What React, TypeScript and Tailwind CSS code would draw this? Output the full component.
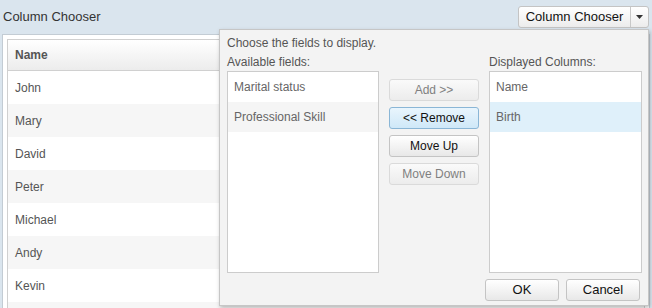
import React from "react";

const rows = ["John", "Mary", "David", "Peter", "Michael", "Andy", "Kevin", ""];

function Btn({ label, kind }: { label: string; kind: "disabled" | "active" | "normal" }) {
  const cls =
    kind === "active"
      ? "border-[#8ab6d6] bg-gradient-to-b from-[#e9f5fd] to-[#cfe8f8] text-[#111]"
      : kind === "disabled"
      ? "border-[#dadada] bg-gradient-to-b from-[#fafafa] to-[#ececec] text-[#808080]"
      : "border-[#c4c4c4] bg-gradient-to-b from-[#ffffff] to-[#e8e8e8] text-[#111]";
  return (
    <div className={`h-[22px] w-[90px] rounded-[3px] border flex items-center justify-center text-[12px] ${cls}`}>
      {label}
    </div>
  );
}

export default function App() {
  return (
    <div
      className="relative w-[652px] h-[308px] overflow-hidden bg-[#dae5ee] text-[12px]"
      style={{ fontFamily: '"Liberation Sans", Arial, sans-serif' }}
    >
      <div className="h-[34px] flex items-center justify-between pl-[3px] pr-[3px]">
        <span className="text-[13px] text-[#333]">Column Chooser</span>
        <div className="h-[22px] w-[131px] mt-[-1px] rounded-[3px] border border-[#c4c4c4] bg-gradient-to-b from-white to-[#ececec] flex text-[13px] text-[#111]">
          <div className="flex-1 flex items-center justify-center">Column Chooser</div>
          <div className="w-[18px] border-l border-[#c8c8c8] flex items-center justify-center">
            <svg width="7" height="4" viewBox="0 0 7 4">
              <path d="M0 0h7L3.5 4z" fill="#333" />
            </svg>
          </div>
        </div>
      </div>
      <div className="ml-[2px] mr-[2px] h-[274px] border-l border-t border-r border-[#c3ccd4] bg-white pt-[4px] pl-[4px] pr-[4px]">
        <div className="border-l border-t border-r border-[#d0d0d0] h-full">
          <div className="h-[31px] border-b border-[#d0d0d0] bg-gradient-to-b from-white to-[#ececec] flex items-center pl-[7px] font-bold text-[#555]">
            Name
          </div>
          {rows.map((r, i) => (
            <div
              key={i}
              className={`h-[33px] flex items-center pl-[7px] text-[#555] ${i % 2 === 1 ? "bg-[#f6f6f6]" : "bg-white"}`}
            >
              {r}
            </div>
          ))}
        </div>
      </div>

      <div className="absolute left-[219px] top-[29px] w-[430px] h-[277px] border border-[#c6c6c6] bg-[#f3f3f3] shadow-[1px_2px_4px_rgba(0,0,0,0.25)] pl-[7px] pr-[6px] pt-[3px] flex flex-col text-[#555]">
        <div className="h-[19px] flex items-center">Choose the fields to display.</div>
        <div className="flex">
          <div className="w-[152px] flex flex-col">
            <div className="h-[19px] flex items-center">Available fields:</div>
            <div className="h-[202px] border border-[#cccccc] bg-white text-[#666]">
              <div className="h-[30px] flex items-center pl-[6px]">Marital status</div>
              <div className="h-[30px] flex items-center pl-[6px] bg-[#f5f5f5]">Professional Skill</div>
            </div>
          </div>
          <div className="ml-[10px] pt-[27px] flex flex-col gap-[6px]">
            <Btn label="Add >>" kind="disabled" />
            <Btn label="<< Remove" kind="active" />
            <Btn label="Move Up" kind="normal" />
            <Btn label="Move Down" kind="disabled" />
          </div>
          <div className="ml-[10px] w-[153px] flex flex-col">
            <div className="h-[19px] flex items-center">Displayed Columns:</div>
            <div className="h-[202px] border border-[#cccccc] bg-white text-[#666]">
              <div className="h-[30px] flex items-center pl-[6px]">Name</div>
              <div className="h-[30px] flex items-center pl-[6px] bg-[#dff0fa]">Birth</div>
            </div>
          </div>
        </div>
        <div className="flex justify-end gap-[7px] mt-[6px] pr-[2px] text-[#111]">
          <div className="h-[22px] w-[74px] rounded-[3px] border border-[#c4c4c4] bg-gradient-to-b from-white to-[#e8e8e8] flex items-center justify-center text-[13px]">
            OK
          </div>
          <div className="h-[22px] w-[74px] rounded-[3px] border border-[#c4c4c4] bg-gradient-to-b from-white to-[#e8e8e8] flex items-center justify-center text-[13px]">
            Cancel
          </div>
        </div>
      </div>
    </div>
  );
}
